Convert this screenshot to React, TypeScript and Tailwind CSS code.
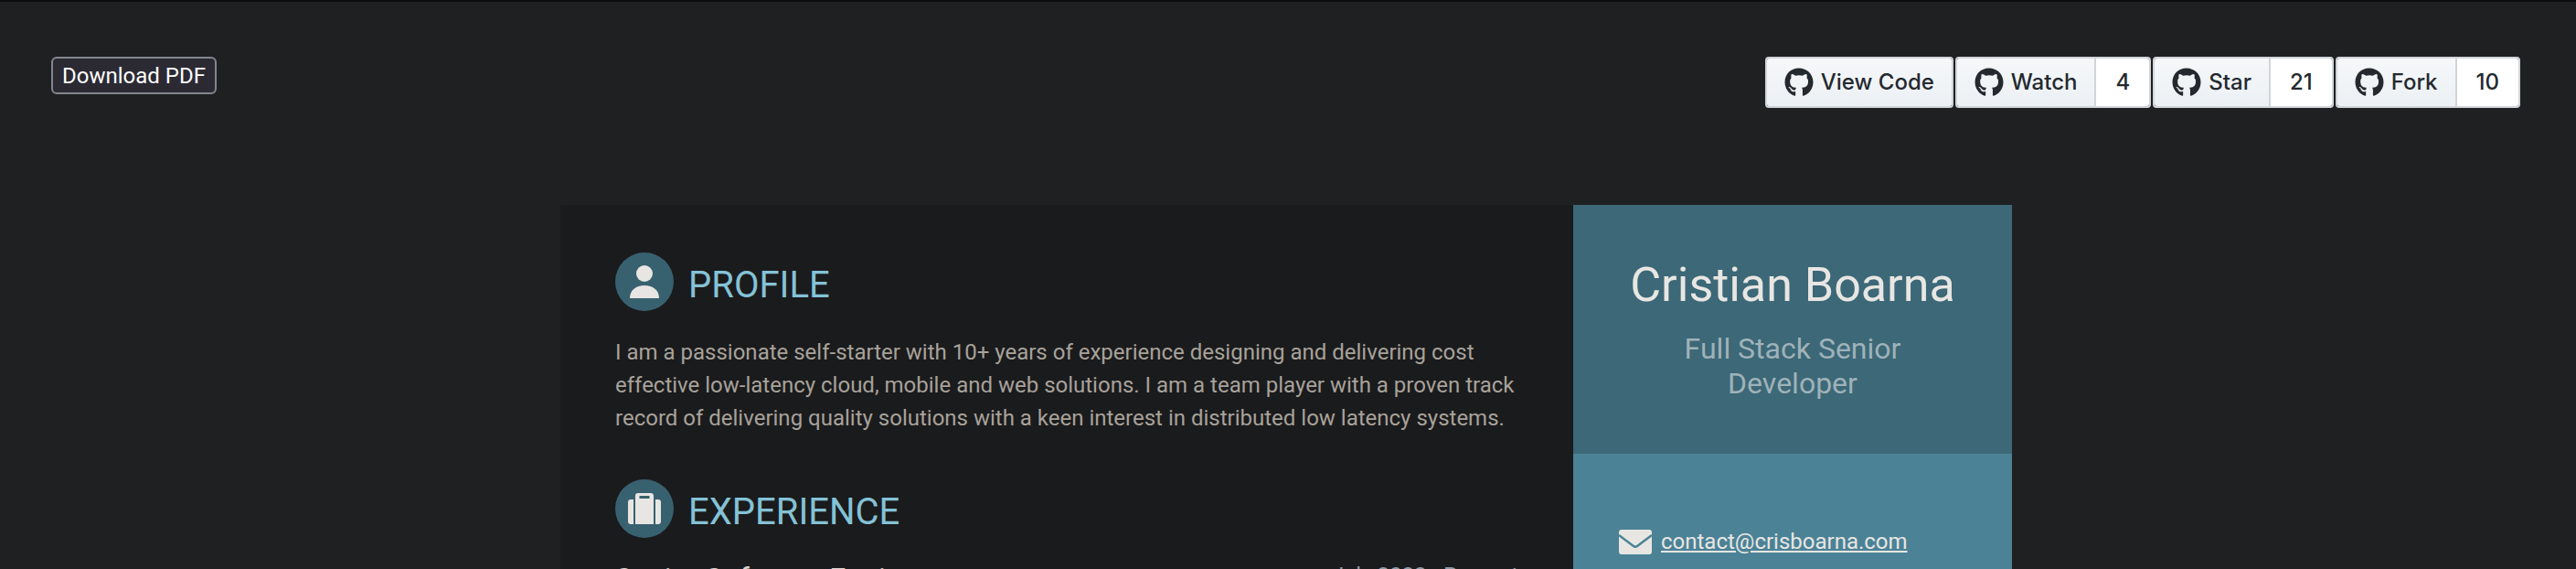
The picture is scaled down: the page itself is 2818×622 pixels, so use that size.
import { FaGithub } from "react-icons/fa";

const ROBOTO = "font-['Roboto',sans-serif]";

function GhButton({ label, count }: { label: string; count?: string }) {
  return (
    <div className="flex h-[56px] overflow-hidden rounded-[4px] border-2 border-[#d1d5da] font-['Inter',sans-serif] text-[24px] font-medium text-[#24292f]">
      <div className="flex items-center gap-[8px] bg-gradient-to-b from-[#f6f8fa] to-[#ebf0f4] px-[19px]">
        <FaGithub className="h-[32px] w-[32px]" />
        <span>{label}</span>
      </div>
      {count && (
        <div className="flex items-center justify-center border-l-2 border-[#d1d5da] bg-white px-[21px]">
          {count}
        </div>
      )}
    </div>
  );
}

function SectionTitle({ title, icon }: { title: string; icon: React.ReactNode }) {
  return (
    <div className="flex items-center gap-[16px]">
      <span className="flex h-[64px] w-[64px] items-center justify-center rounded-full bg-[#386170]">
        {icon}
      </span>
      <h2 className="mt-[8px] text-[40px] leading-[56px] text-[#84c2d6]">{title}</h2>
    </div>
  );
}

export default function App() {
  return (
    <div className={`h-[622px] overflow-hidden border-t-2 border-[#0d0e10] bg-[#1f2022] ${ROBOTO}`}>
      <div className="flex items-start justify-between pl-[56px] pr-[61px] pt-[60px]">
        <button className="h-[41px] rounded-[6px] border-2 border-[#85858f] bg-[#2b2a33] px-[10px] text-[24px] leading-none text-white">
          Download PDF
        </button>
        <div className="flex gap-[2px]">
          <GhButton label="View Code" />
          <GhButton label="Watch" count="4" />
          <GhButton label="Star" count="21" />
          <GhButton label="Fork" count="10" />
        </div>
      </div>

      <div className="ml-[613px] mt-[106px] flex w-[1588px]">
        <main className="w-[1108px] bg-[#1a1b1d] px-[60px] pt-[52px]">
          <SectionTitle
            title="PROFILE"
            icon={
              <svg viewBox="0 0 32 36" className="h-[36px] w-[32px] fill-[#e8e6e3]">
                <circle cx="16" cy="9" r="9" />
                <path d="M0 36c0-9 7-14 16-14s16 5 16 14z" />
              </svg>
            }
          />
          <p className="mt-[27px] w-[990px] text-[24px] leading-[36px] text-[#a8a29a]">
            I am a passionate self-starter with 10+ years of experience designing and delivering cost effective low-latency cloud, mobile and web solutions. I am a team player with a proven track record of delivering quality solutions with a keen interest in distributed low latency systems.
          </p>
          <div className="mt-[49px]">
            <SectionTitle
              title="EXPERIENCE"
              icon={
                <svg viewBox="0 0 36 34" className="h-[34px] w-[36px] fill-[#e8e6e3]">
                  <path fillRule="evenodd" d="M8 3a3 3 0 0 1 3-3h14a3 3 0 0 1 3 3v31H8zM12.5 3v3h11V3z" />
                  <path d="M0 10a3 3 0 0 1 3-3h3v27H3a3 3 0 0 1-3-3zM30 7h3a3 3 0 0 1 3 3v21a3 3 0 0 1-3 3h-3z" />
                </svg>
              }
            />
          </div>
          <div className="mt-[24px] flex items-start justify-between">
            <span className="text-[32px] leading-[40px] text-[#d8d4cf]">Senior Software Engineer</span>
            <span className="text-[24px] leading-[34px] text-[#8d99a5]">July 2022 - Present</span>
          </div>
        </main>

        <aside className="w-[480px]">
          <header className="flex h-[272px] flex-col items-center bg-[#3c6877] px-[50px] pt-[52px] text-center">
            <h1 className="text-[52px] leading-[72px] text-[#e8e6e3]">Cristian Boarna</h1>
            <p className="mt-[14px] w-[300px] text-[32px] leading-[38px] text-[#9fb2b9]">
              Full Stack Senior Developer
            </p>
          </header>
          <div className="h-[300px] bg-[#4b8296] px-[50px] pt-[78px]">
            <div className="flex items-center gap-[10px] text-[24px] leading-[36px] text-[#e8e6e3]">
              <svg viewBox="0 0 36 27" className="h-[27px] w-[36px] shrink-0">
                <rect width="36" height="27" rx="3" className="fill-[#e8e6e3]" />
                <path d="M0 6l16 12q2 1.5 4 0L36 6" fill="none" stroke="#4b8296" strokeWidth="2.5" />
              </svg>
              <a className="underline underline-offset-2">contact@crisboarna.com</a>
            </div>
          </div>
        </aside>
      </div>
    </div>
  );
}
